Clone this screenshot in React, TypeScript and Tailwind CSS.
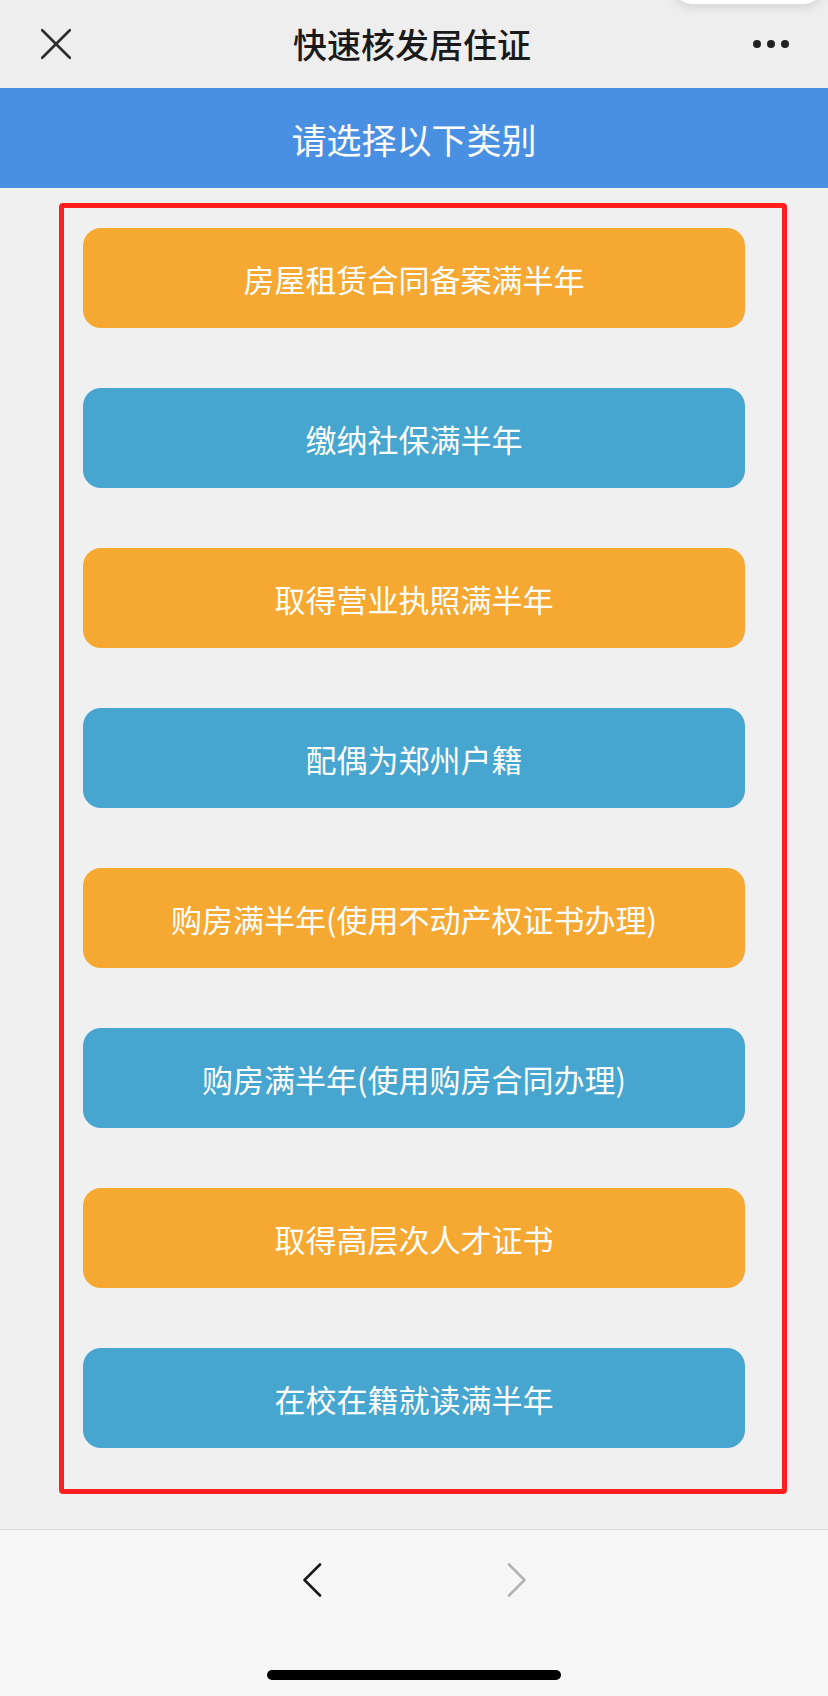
import React from "react";

const items = [
  { t: "房屋租赁合同备案满半年", c: "orange" },
  { t: "缴纳社保满半年", c: "blue" },
  { t: "取得营业执照满半年", c: "orange" },
  { t: "配偶为郑州户籍", c: "blue" },
  { t: "购房满半年(使用不动产权证书办理)", c: "orange" },
  { t: "购房满半年(使用购房合同办理)", c: "blue" },
  { t: "取得高层次人才证书", c: "orange" },
  { t: "在校在籍就读满半年", c: "blue" },
];

export default function App() {
  return (
    <div
      className="relative w-[828px] h-[1696px] overflow-hidden bg-[#f0f0f0] flex flex-col"
      style={{ fontFamily: '"PingFang SC", "Noto Sans CJK SC", "Noto Sans", sans-serif' }}
    >
      {/* top-right capsule overlay */}
      <div className="absolute right-[2px] top-[-42px] w-[156px] h-[47px] rounded-[24px] bg-white border border-[#dedede] shadow-[0_2px_10px_rgba(0,0,0,0.12)]" />

      {/* nav bar */}
      <div className="h-[88px] bg-[#eeeeee] flex items-center justify-between px-[42px] shrink-0">
        <svg width="30" height="30" viewBox="0 0 30 30" className="ml-[-1px]">
          <path d="M1 1 L29 29 M29 1 L1 29" stroke="#2b2b2b" strokeWidth="2.6" strokeLinecap="round" />
        </svg>
        <div className="text-[34px] font-medium text-[#1a1a1a] leading-none tracking-[0px]">快速核发居住证</div>
        <div className="flex gap-[6px] items-center mr-[-3px]">
          <span className="w-[8px] h-[8px] rounded-full bg-[#222]" />
          <span className="w-[8px] h-[8px] rounded-full bg-[#222]" />
          <span className="w-[8px] h-[8px] rounded-full bg-[#222]" />
        </div>
      </div>

      {/* banner */}
      <div className="h-[100px] bg-[#4a90e2] flex items-center justify-center shrink-0">
        <span className="text-[35px] text-white leading-none">请选择以下类别</span>
      </div>

      {/* content */}
      <div className="flex-1 pt-[15px]">
        <div className="ml-[59px] w-[728px] border-[5px] border-[#ff1f1f] rounded-[4px] pt-[20px] pb-[41px] pl-[19px] flex flex-col gap-[60px]">
          {items.map((it) => (
            <div
              key={it.t}
              className={`w-[662px] h-[100px] rounded-[18px] flex items-center justify-center text-white text-[31px] leading-none ${
                it.c === "orange" ? "bg-[#f5a832]" : "bg-[#46a6d0]"
              }`}
            >
              {it.t}
            </div>
          ))}
        </div>
      </div>

      {/* bottom toolbar */}
      <div className="h-[167px] bg-[#f7f7f7] border-t border-[#dcdcdc] shrink-0 flex flex-col items-center">
        <div className="flex items-center gap-[185px] mt-[33px]">
          <svg width="20" height="34" viewBox="0 0 20 34">
            <path d="M18 1.5 L2.5 17 L18 32.5" fill="none" stroke="#1a1a1a" strokeWidth="2.6" strokeLinecap="round" strokeLinejoin="round" />
          </svg>
          <svg width="20" height="34" viewBox="0 0 20 34">
            <path d="M2 1.5 L17.5 17 L2 32.5" fill="none" stroke="#b3b3b3" strokeWidth="2.6" strokeLinecap="round" strokeLinejoin="round" />
          </svg>
        </div>
        <div className="mt-auto mb-[16px] w-[294px] h-[10px] rounded-full bg-black" />
      </div>
    </div>
  );
}
